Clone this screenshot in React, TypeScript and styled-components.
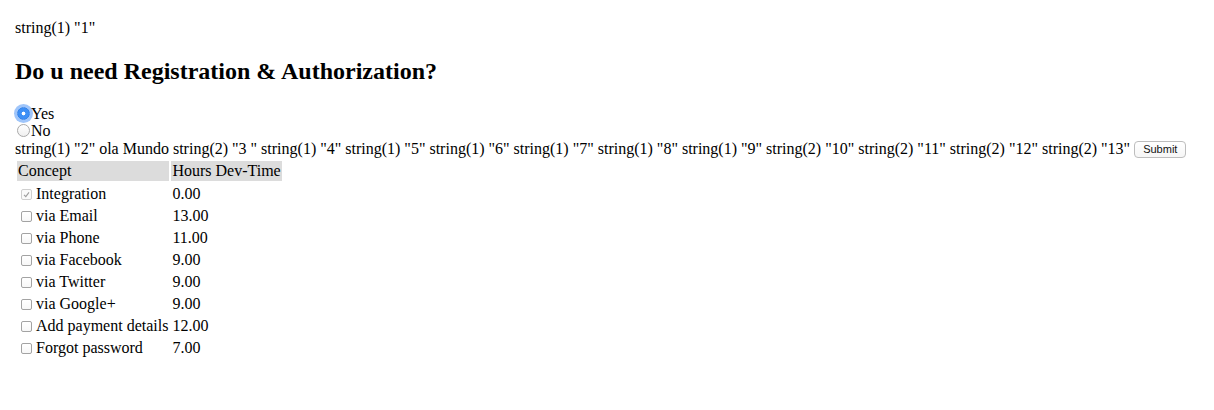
import React from "react";
import styled, { createGlobalStyle } from "styled-components";

const Global = createGlobalStyle`
  html, body { margin: 0; padding: 0; background: #fff; }
  body { font-family: "Liberation Serif", "Times New Roman", serif; font-size: 16px; color: #000; }
`;

const Page = styled.div`
  padding: 18px 15px 0 15px;
`;

const Dump = styled.div`
  line-height: 19px;
`;

const Heading = styled.h2`
  font-size: 24px;
  font-weight: bold;
  margin: 21px 0 20px;
  line-height: 27px;
`;

const Form = styled.form`
  margin: 0;
`;

const RadioLine = styled.label`
  display: flex;
  align-items: center;
  height: 17px;
  line-height: 17px;
`;

const Radio = styled.input<{ $focused?: boolean }>`
  appearance: none;
  -webkit-appearance: none;
  width: 13px;
  height: 13px;
  margin: 0 1px 0 2px;
  border-radius: 50%;
  box-sizing: border-box;
  border: 1px solid #a9a9a9;
  background: linear-gradient(#ffffff, #f0f0f0);
  flex: none;
  &:checked {
    border: 1px solid #2f7fe8;
    background: radial-gradient(circle, #ffffff 0 1.6px, #3d8ff5 2.2px);
  }
  ${(p) => (p.$focused ? "box-shadow: 0 0 0 3px rgba(80, 150, 245, 0.55);" : "")}
`;

const TextLine = styled.div`
  display: flex;
  align-items: center;
  height: 20px;
  white-space: pre;
`;

const SubmitButton = styled.button`
  font-family: "Liberation Sans", Arial, sans-serif;
  font-size: 11px;
  height: 17px;
  padding: 0 8px;
  margin-left: 4px;
  border: 1px solid #bdbdbd;
  border-radius: 4px;
  background: linear-gradient(#ffffff, #f6f6f6);
  color: #111;
  line-height: 15px;
`;

const Table = styled.table`
  border-collapse: separate;
  border-spacing: 2px;
  margin-left: 0;
  font-size: 16px;
`;

const HeadCell = styled.th`
  background: #dcdcdc;
  font-weight: normal;
  text-align: left;
  padding: 1px;
  height: 18px;
  line-height: 18px;
`;

const Cell = styled.td`
  padding: 2px 1px 0;
  height: 18px;
  line-height: 18px;
  white-space: nowrap;
`;

const CheckLabel = styled.label`
  display: flex;
  align-items: center;
  height: 18px;
`;

const CheckWrap = styled.span`
  position: relative;
  display: block;
  width: 11px;
  height: 11px;
  margin: 0 4px 0 3px;
  flex: none;
`;

const Check = styled.input`
  appearance: none;
  -webkit-appearance: none;
  display: block;
  box-sizing: border-box;
  width: 11px;
  height: 11px;
  margin: 0;
  border: 1px solid #a3a3a3;
  border-radius: 2px;
  background: linear-gradient(#ffffff, #f7f7f7);
  &:disabled {
    border-color: #cfcfcf;
    background: #fafafa;
  }
`;

const Tick = styled.svg`
  position: absolute;
  left: 1px;
  top: 1px;
  width: 9px;
  height: 9px;
  pointer-events: none;
`;

const rows = [
  { name: "Integration", hours: "0.00", locked: true },
  { name: "via Email", hours: "13.00" },
  { name: "via Phone", hours: "11.00" },
  { name: "via Facebook", hours: "9.00" },
  { name: "via Twitter", hours: "9.00" },
  { name: "via Google+", hours: "9.00" },
  { name: "Add payment details", hours: "12.00" },
  { name: "Forgot password", hours: "7.00" },
];

const dumpLine =
  'string(1) "2" ola Mundo string(2) "3 " string(1) "4" string(1) "5" string(1) "6" string(1) "7" string(1) "8" string(1) "9" string(2) "10" string(2) "11" string(2) "12" string(2) "13"';

export default function App() {
  return (
    <Page>
      <Global />
      <Dump>string(1) "1"</Dump>
      <Heading>Do u need Registration &amp; Authorization?</Heading>
      <Form onSubmit={(e) => e.preventDefault()}>
        <RadioLine>
          <Radio type="radio" name="auth" defaultChecked $focused />
          Yes
        </RadioLine>
        <RadioLine>
          <Radio type="radio" name="auth" />
          No
        </RadioLine>
        <TextLine>
          {dumpLine}
          <SubmitButton type="submit">Submit</SubmitButton>
        </TextLine>
        <Table>
          <thead>
            <tr>
              <HeadCell>Concept</HeadCell>
              <HeadCell>Hours Dev-Time</HeadCell>
            </tr>
          </thead>
          <tbody>
            {rows.map((r) => (
              <tr key={r.name}>
                <Cell>
                  <CheckLabel>
                    <CheckWrap>
                      <Check type="checkbox" defaultChecked={r.locked} disabled={r.locked} />
                      {r.locked && (
                        <Tick viewBox="0 0 9 9">
                          <path d="M2 4.8 L3.8 6.6 L7 2.4" fill="none" stroke="#9d9d9d" strokeWidth="1.1" />
                        </Tick>
                      )}
                    </CheckWrap>
                    {r.name}
                  </CheckLabel>
                </Cell>
                <Cell>{r.hours}</Cell>
              </tr>
            ))}
          </tbody>
        </Table>
      </Form>
    </Page>
  );
}
